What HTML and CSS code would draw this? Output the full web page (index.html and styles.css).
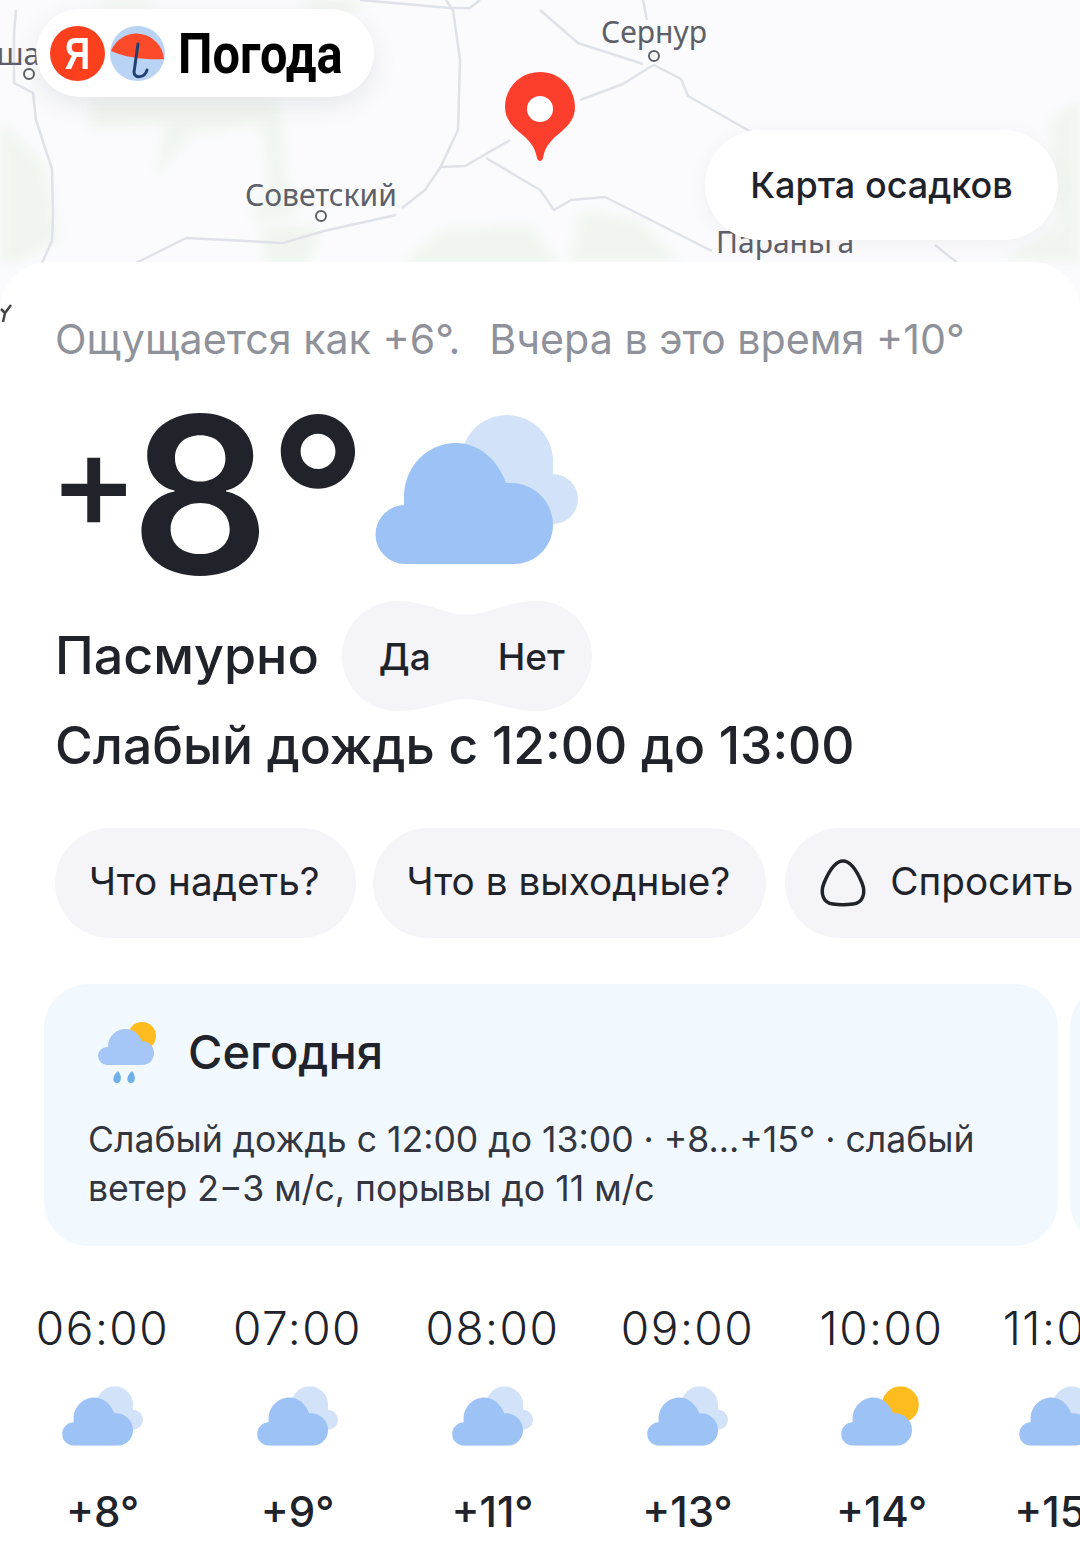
FILE: index.html
```html
<!DOCTYPE html>
<html lang="ru">
<head>
    <meta charset="UTF-8">
    <meta name="viewport" content="width=device-width, initial-scale=1.0">
    <title>Погода</title>
    <link rel="stylesheet" href="styles.css">
</head>
<body>
    <svg class="icon-defs" width="0" height="0">
        <symbol id="cloud-back" viewBox="0 0 203 149">
            <circle cx="132" cy="46" r="46" fill="#d2e2f8"/>
            <circle cx="178" cy="84" r="25" fill="#d2e2f8"/>
            <rect x="100" y="50" width="78" height="59" fill="#d2e2f8"/>
        </symbol>
        <symbol id="cloud-sun" viewBox="0 0 203 149">
            <circle cx="149" cy="46" r="46" fill="#ffbc1f"/>
        </symbol>
        <symbol id="cloud-front" viewBox="0 0 203 149">
            <path d="M30 149A29.5 29.5 0 0 1 30 90H29V82C29 52 52 28 81 28C104 28 123 45 131 68C158 66 178 86 178 110C178 132 160 149 139 149Z" fill="#9dc3f6"/>
        </symbol>
    </svg>

    <div class="map">
        <svg class="map-bg" viewBox="0 0 1080 330" width="1080" height="330">
            <defs>
                <filter id="soft"><feGaussianBlur stdDeviation="6"/></filter>
            </defs>
            <g fill="#f0f6ef" filter="url(#soft)">
                <path d="M0 120L45 165L60 240L20 262H0Z"/>
                <path d="M95 0H155L150 8H100Z"/>
                <path d="M300 0H370L350 14L310 12Z"/>
                <path d="M90 100H280L285 170L300 215L250 220L270 180L260 125L190 135L155 178L165 125L90 130Z"/>
                <path d="M260 225H320L310 265H265Z"/>
                <path d="M400 265L440 230L530 225L560 265Z"/>
                <path d="M1050 120L1080 100V262H1000L1060 225Z"/>
                <path d="M580 210L640 220L680 262H570Z"/>
            </g>
            <g fill="none" stroke="#dfe2e9" stroke-width="2.5" stroke-linejoin="round">
                <path d="M16 10L14 34L14 83L33 93L36 120L52 169L53 214L52 241L41 265L65 272M41 265L36 285"/>
                <path d="M124 269L186 238L283 243L324 231L396 215"/>
                <path d="M402 208L425 190L440 168L458 130L460 60L453 10L446 0"/>
                <path d="M440 167L465 166L510 140"/>
                <path d="M486 158L540 190L554 210L571 200L605 197L712 251"/>
                <path d="M580 100L623 84L647 69L654 65L681 79L688 96L753 133"/>
                <path d="M540 10L578 43L643 64M643 0L647 20"/>
                <path d="M360 0L450 8L470 8L480 0"/>
                <path d="M935 245L960 265"/>
            </g>
        </svg>

        <span class="map-label label-left">Тоншаево</span>
        <span class="map-dot dot-left"></span>
        <span class="map-label label-sernur">Сернур</span>
        <span class="map-dot dot-sernur"></span>
        <span class="map-label label-sovet">Советский</span>
        <span class="map-dot dot-sovet"></span>
        <span class="map-label label-paranga">Параньга</span>

        <svg class="map-pin" viewBox="0 0 72 90" width="72" height="90">
            <path d="M36 0C56 0 71 16 71 35C71 46 65 53 57 60C48 67 41 74 39 86C38 90 34 90 33 86C31 74 24 67 15 60C7 53 1 46 1 35C1 16 16 0 36 0Z" fill="#fc3f2d"/>
            <circle cx="36" cy="37" r="13" fill="#fff"/>
        </svg>

        <div class="logo">
            <span class="logo-ya"><span class="logo-ya-letter">Я</span></span>
            <svg class="logo-umbrella" viewBox="0 0 55 55" width="55" height="55">
                <circle cx="27.5" cy="27.5" r="27.5" fill="#b9d3f5"/>
                <path d="M1 25A27.5 27.5 0 0 1 54 33C38 34 16 32 1 25Z" fill="#fc4a2a"/>
                <path d="M28 18L24 46C24 53 35 52 37 44" fill="none" stroke="#20406f" stroke-width="3" stroke-linecap="round"/>
            </svg>
            <span class="logo-text">Погода</span>
        </div>

        <div class="map-button">Карта осадков</div>
    </div>

    <main class="sheet">
        <svg class="sheet-mark" viewBox="0 0 12 20" width="12" height="20">
            <path d="M1 5L5 9L11 1M5 9L3 18" fill="none" stroke="#444" stroke-width="2.5"/>
        </svg>

        <p class="feels">
            <span>Ощущается как +6°.</span>
            <span>Вчера в это время +10°</span>
        </p>

        <div class="now">
            <div class="temp">
                <span class="temp-plus">+</span><span class="temp-value">8°</span>
            </div>
            <svg class="now-icon" viewBox="0 0 203 149" width="203" height="149">
                <use href="#cloud-back"/>
                <use href="#cloud-front"/>
            </svg>
        </div>

        <div class="condition-row">
            <h1 class="condition">Пасмурно</h1>
            <div class="vote">
                <svg class="vote-bg" viewBox="0 0 250 110" width="250" height="110">
                    <path d="M55 0C85 0 105 14 125 14C145 14 165 0 195 0A55 55 0 0 1 195 110C165 110 145 98 125 98C105 98 85 110 55 110A55 55 0 0 1 55 0Z" fill="#f5f5f9"/>
                </svg>
                <span class="vote-item">Да</span>
                <span class="vote-item">Нет</span>
            </div>
        </div>

        <h2 class="rain">Слабый дождь с 12:00 до 13:00</h2>

        <div class="chips">
            <div class="chip">Что надеть?</div>
            <div class="chip">Что в выходные?</div>
            <div class="chip chip-alice">
                <svg class="alice" viewBox="0 0 48 48" width="48" height="48">
                    <path d="M24 2C32 2 38 12 43 24C47 34 44 44 34 45C27 46 20 46 14 45C4 44 1 34 5 24C10 12 16 2 24 2Z" fill="none" stroke="#21232b" stroke-width="3.5"/>
                </svg>
                Спросить у Алисы
            </div>
        </div>

        <div class="cards">
            <section class="card">
                <div class="card-head">
                    <svg class="card-icon" viewBox="0 0 60 62" width="60" height="62">
                        <circle cx="44" cy="15" r="14" fill="#ffbc1f"/>
                        <path d="M9 44A9 9 0 0 1 9 26H10C10 15 18 8 28 8C36 8 41 13 44 20C51 20 56 26 56 32C56 39 51 44 44 44Z" fill="#a5c6f6"/>
                        <path d="M20 50C24 54 24 62 19 62C14 62 14 55 20 50ZM34 50C38 54 38 62 33 62C28 62 28 55 34 50Z" fill="#6fb0e8"/>
                    </svg>
                    <h3 class="card-title">Сегодня</h3>
                </div>
                <p class="card-text">Слабый дождь с 12:00 до 13:00 · +8...+15° · слабый ветер 2−3 м/с, порывы до 11 м/с</p>
            </section>
            <section class="card"></section>
        </div>

        <div class="hours">
            <div class="hour">
                <div class="hour-time">06:00</div>
                <svg class="hour-icon" viewBox="0 0 203 149" width="81" height="60"><use href="#cloud-back"/><use href="#cloud-front"/></svg>
                <div class="hour-temp">+8°</div>
            </div>
            <div class="hour">
                <div class="hour-time">07:00</div>
                <svg class="hour-icon" viewBox="0 0 203 149" width="81" height="60"><use href="#cloud-back"/><use href="#cloud-front"/></svg>
                <div class="hour-temp">+9°</div>
            </div>
            <div class="hour">
                <div class="hour-time">08:00</div>
                <svg class="hour-icon" viewBox="0 0 203 149" width="81" height="60"><use href="#cloud-back"/><use href="#cloud-front"/></svg>
                <div class="hour-temp">+11°</div>
            </div>
            <div class="hour">
                <div class="hour-time">09:00</div>
                <svg class="hour-icon" viewBox="0 0 203 149" width="81" height="60"><use href="#cloud-back"/><use href="#cloud-front"/></svg>
                <div class="hour-temp">+13°</div>
            </div>
            <div class="hour hour-ten">
                <div class="hour-time">10:00</div>
                <svg class="hour-icon" viewBox="0 0 203 149" width="81" height="60"><use href="#cloud-sun"/><use href="#cloud-front"/></svg>
                <div class="hour-temp">+14°</div>
            </div>
            <div class="hour hour-eleven">
                <div class="hour-time">11:00</div>
                <svg class="hour-icon" viewBox="0 0 203 149" width="81" height="60"><use href="#cloud-back"/><use href="#cloud-front"/></svg>
                <div class="hour-temp">+15°</div>
            </div>
        </div>
    </main>
</body>
</html>
```

FILE: styles.css
```css
html, body {
    margin: 0;
    padding: 0;
}

body {
    width: 1080px;
    height: 1568px;
    overflow: hidden;
    background: #fff;
    font-family: Inter, "Noto Sans", sans-serif;
    color: #21232b;
}

.icon-defs {
    position: absolute;
}

/* Карта */
.map {
    position: relative;
    height: 320px;
    background: #fbfbfd;
    overflow: hidden;
}

.map-bg {
    position: absolute;
    left: 0;
    top: 0;
}

.map-label {
    position: absolute;
    font-family: "Noto Sans", sans-serif;
    font-size: 30px;
    line-height: 36px;
    color: #5d6068;
    white-space: nowrap;
}

.label-left {
    left: -55px;
    top: 36px;
}

.label-sernur {
    left: 601px;
    top: 14px;
}

.label-sovet {
    left: 245px;
    top: 177px;
}

.label-paranga {
    left: 716px;
    top: 224px;
}

.map-dot {
    position: absolute;
    width: 8px;
    height: 8px;
    border: 2.5px solid #5d6068;
    border-radius: 50%;
}

.dot-left {
    left: 23px;
    top: 68px;
}

.dot-sernur {
    left: 648px;
    top: 50px;
}

.dot-sovet {
    left: 315px;
    top: 210px;
}

.map-pin {
    position: absolute;
    left: 504px;
    top: 72px;
}

.logo {
    position: absolute;
    left: 36px;
    top: 9px;
    width: 338px;
    height: 88px;
    box-sizing: border-box;
    padding-left: 14px;
    display: flex;
    align-items: center;
    gap: 5px;
    background: #fff;
    border-radius: 44px;
    box-shadow: 0 8px 24px rgba(60, 70, 100, 0.1);
}

.logo-ya {
    width: 55px;
    height: 55px;
    border-radius: 50%;
    background: #fc3f1d;
    color: #fff;
    font-family: "Liberation Sans", sans-serif;
    font-weight: 700;
    font-size: 44px;
    line-height: 55px;
    text-align: center;
}

.logo-ya-letter {
    display: block;
    transform: scaleX(0.8);
}

.logo-umbrella {
    flex: none;
}

.logo-text {
    margin: 1px 0 0 8px;
    font-family: Roboto, sans-serif;
    font-weight: 700;
    font-size: 56px;
    line-height: 60px;
    color: #000;
    transform: scaleX(0.87);
    transform-origin: left center;
}

.map-button {
    position: absolute;
    left: 705px;
    top: 130px;
    width: 353px;
    height: 110px;
    border-radius: 55px;
    background: #fff;
    font-size: 36px;
    font-weight: 500;
    line-height: 110px;
    text-align: center;
    box-shadow: 0 4px 20px rgba(60, 70, 100, 0.06);
}

/* Основной блок */
.sheet {
    position: relative;
    margin-top: -58px;
    height: 1306px;
    box-sizing: border-box;
    padding-top: 52px;
    background: #fff;
    border-radius: 48px 48px 0 0;
    overflow: hidden;
}

.sheet-mark {
    position: absolute;
    left: 0;
    top: 42px;
}

.feels {
    margin: 0 0 0 55px;
    display: flex;
    gap: 29px;
    font-size: 41.2px;
    line-height: 50px;
    color: #8f929b;
    white-space: nowrap;
}

.now {
    display: flex;
    align-items: flex-start;
    margin: 47px 0 0 55px;
    height: 190px;
}

.temp {
    display: flex;
    align-items: flex-start;
    width: 320px;
    font-weight: 600;
    line-height: 1;
    color: #21232b;
}

.temp-plus {
    font-size: 134px;
    font-weight: 500;
    margin: 1px 0 0 -6px;
}

.temp-value {
    font-size: 218px;
    margin: -28px 0 0 -8px;
    line-height: 225px;
}

.now-icon {
    flex: none;
    margin-top: 4px;
}

.condition-row {
    display: flex;
    align-items: center;
    margin: 0 0 0 55px;
    gap: 23px;
    height: 110px;
}

.condition {
    margin: 0;
    font-size: 52px;
    font-weight: 500;
    line-height: 110px;
}

.vote {
    position: relative;
    width: 250px;
    height: 110px;
    display: flex;
    align-items: center;
    font-size: 37px;
    font-weight: 500;
}

.vote-bg {
    position: absolute;
    left: 0;
    top: 0;
}

.vote-item {
    position: relative;
    margin-left: 37px;
}

.vote-item + .vote-item {
    margin-left: 67px;
}

.rain {
    margin: 4px 0 0 55px;
    font-size: 51.5px;
    font-weight: 500;
    line-height: 60px;
    white-space: nowrap;
}

.chips {
    display: flex;
    gap: 17px;
    margin: 53px 0 0 55px;
    width: 1200px;
}

.chip {
    flex: none;
    height: 110px;
    box-sizing: border-box;
    padding: 0 36px 5px 34px;
    border-radius: 55px;
    background: #f5f5f9;
    display: flex;
    align-items: center;
    font-size: 38.7px;
    white-space: nowrap;
}

.chip-alice {
    margin-left: 2px;
}

.alice {
    margin: 5px 23px 0 0;
}

.cards {
    display: flex;
    gap: 12px;
    margin: 46px 0 0 44px;
    width: 1400px;
}

.card {
    flex: none;
    width: 1014px;
    height: 262px;
    box-sizing: border-box;
    padding: 37px 44px 0;
    border-radius: 44px;
    background: #f2f9fe;
}

.card-head {
    display: flex;
    align-items: center;
    gap: 30px;
    margin-left: 10px;
}

.card-icon {
    flex: none;
}

.card-title {
    margin: 0;
    font-size: 47px;
    font-weight: 500;
    line-height: 62px;
}

.card-text {
    margin: 32px 0 0;
    font-size: 35.6px;
    line-height: 49px;
    color: #33363e;
}

.hours {
    display: flex;
    margin: 54px 0 0 5px;
    width: 1300px;
}

.hour {
    flex: none;
    width: 195px;
    display: flex;
    flex-direction: column;
    align-items: center;
}

.hour-ten {
    margin-left: -1px;
}

.hour-eleven {
    margin-left: -17px;
}

.hour-time {
    font-size: 46px;
    font-weight: 300;
    letter-spacing: 1.5px;
    line-height: 56px;
}

.hour-icon {
    margin-top: 30px;
}

.hour-temp {
    margin-top: 36px;
    font-size: 42px;
    font-weight: 500;
    line-height: 60px;
}
```
